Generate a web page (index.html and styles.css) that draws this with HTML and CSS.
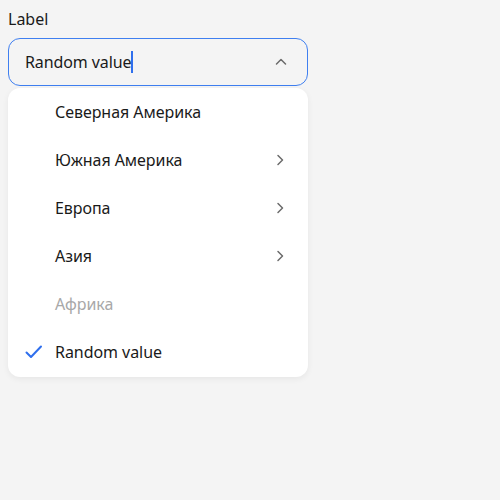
FILE: index.html
```html
<!DOCTYPE html>
<html>
<head>
<meta charset="utf-8">
<link rel="stylesheet" href="styles.css">
</head>
<body>
<div class="field">
  <div class="label">Label</div>
  <div class="input">
    <span class="value">Random value<span class="caret"></span></span>
    <svg class="chev-up" width="16" height="16" viewBox="0 0 16 16"><path d="M3.5 10 L8 5.5 L12.5 10" fill="none" stroke="#6b6b6b" stroke-width="1.5" stroke-linecap="round" stroke-linejoin="round"/></svg>
  </div>
  <ul class="menu">
    <li class="item"><span class="mark"></span><span class="text">Северная Америка</span></li>
    <li class="item"><span class="mark"></span><span class="text">Южная Америка</span><svg class="chev" width="16" height="16" viewBox="0 0 16 16"><path d="M6 3.5 L10.5 8 L6 12.5" fill="none" stroke="#6b6b6b" stroke-width="1.5" stroke-linecap="round" stroke-linejoin="round"/></svg></li>
    <li class="item"><span class="mark"></span><span class="text">Европа</span><svg class="chev" width="16" height="16" viewBox="0 0 16 16"><path d="M6 3.5 L10.5 8 L6 12.5" fill="none" stroke="#6b6b6b" stroke-width="1.5" stroke-linecap="round" stroke-linejoin="round"/></svg></li>
    <li class="item"><span class="mark"></span><span class="text">Азия</span><svg class="chev" width="16" height="16" viewBox="0 0 16 16"><path d="M6 3.5 L10.5 8 L6 12.5" fill="none" stroke="#6b6b6b" stroke-width="1.5" stroke-linecap="round" stroke-linejoin="round"/></svg></li>
    <li class="item disabled"><span class="mark"></span><span class="text">Африка</span></li>
    <li class="item"><span class="mark"><svg width="20" height="20" viewBox="0 0 20 20"><path d="M2.5 10.5 L7 15 L17 4.5" fill="none" stroke="#2f6fed" stroke-width="2" stroke-linecap="round" stroke-linejoin="round"/></svg></span><span class="text">Random value</span></li>
  </ul>
</div>
</body>
</html>
```

FILE: styles.css
```css
html, body {
  margin: 0;
  padding: 0;
  background: #f4f4f4;
}
body {
  padding: 8px;
  font-family: "Noto Sans", sans-serif;
  font-size: 16px;
  color: #1a1a1a;
}
.field {
  width: 300px;
}
.label {
  height: 22px;
  line-height: 22px;
  margin-bottom: 8px;
}
.input {
  box-sizing: border-box;
  height: 48px;
  border: 1px solid #3f7ff0;
  border-radius: 12px;
  display: flex;
  align-items: center;
  padding: 0 16px 0 16px;
}
.value {
  flex: 1;
  display: flex;
  align-items: center;
  letter-spacing: -0.1px;
}
.caret {
  display: inline-block;
  width: 1.5px;
  height: 22px;
  background: #2f6fed;
}
.chev-up {
  margin-right: 2px;
}
.menu {
  list-style: none;
  margin: 2px 0 0 0;
  padding: 0 0 1px 0;
  background: #fff;
  border-radius: 12px;
  box-shadow: 0 2px 6px rgba(0,0,0,0.06);
}
.item {
  height: 48px;
  display: flex;
  align-items: center;
  padding: 0 20px 0 16px;
}
.mark {
  width: 31px;
  display: flex;
  align-items: center;
}
.text {
  flex: 1;
  letter-spacing: -0.05px;
}
.disabled .text {
  color: #a8a8a8;
}
```
